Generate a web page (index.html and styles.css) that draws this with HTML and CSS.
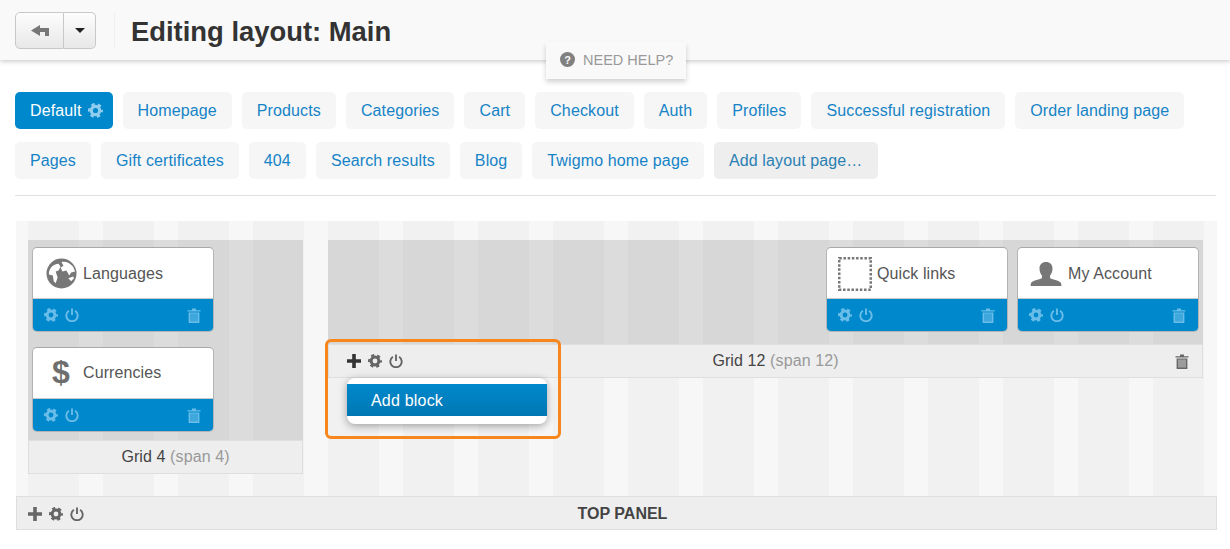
FILE: index.html
```html
<!DOCTYPE html>
<html lang="en">
<head>
  <meta charset="UTF-8">
  <title>Editing layout: Main</title>
  <link rel="stylesheet" href="styles.css">
</head>
<body>
  <svg class="sprites" width="0" height="0">
    <symbol id="i-gear" viewBox="0 0 14 14">
      <circle cx="7" cy="7" r="3.9" fill="none" stroke="currentColor" stroke-width="3"/>
      <circle cx="7" cy="7" r="5.8" fill="none" stroke="currentColor" stroke-width="2.4" stroke-dasharray="3.07 3" stroke-dashoffset="1.5"/>
    </symbol>
    <symbol id="i-power" viewBox="0 0 14 14">
      <path d="M3.900 2.800a5.700 5.700 0 1 0 6.200 0" fill="none" stroke="currentColor" stroke-width="1.900"/>
      <path d="M7 .5v6.500" fill="none" stroke="currentColor" stroke-width="1.900"/>
    </symbol>
    <symbol id="i-trash" viewBox="0 0 14 15">
      <path d="M.5 2.200h13v1.300H.5zM5 .5h4v1.700H5zM1.600 4.400h10.800V15H1.600z" fill="currentColor"/>
      <path d="M4 5.500v8M6 5.500v8M8 5.500v8M10 5.500v8" fill="none" stroke="var(--slit)" stroke-width=".8"/>
    </symbol>
    <symbol id="i-plus" viewBox="0 0 14 14">
      <path d="M5.200 0h3.600v5.200H14v3.600H8.800V14H5.200V8.800H0V5.200h5.200z" fill="currentColor"/>
    </symbol>
  </svg>

  <header class="topbar">
    <div class="btn-group">
      <button class="btn btn-back">
        <svg width="18" height="11" viewBox="0 0 18 11"><path d="M0 5.500 9 0v3h9v8h-4V7H9v4z" fill="#777"/></svg>
      </button>
      <button class="btn btn-caret"><span class="caret"></span></button>
    </div>
    <h1>Editing layout: Main</h1>
  </header>
  <div class="help"><span class="help-icon">?</span>NEED HELP?</div>

  <main class="page">
    <nav class="tabs">
      <a class="tab active">Default <svg class="ico tab-gear"><use href="#i-gear"/></svg></a>
      <a class="tab">Homepage</a>
      <a class="tab">Products</a>
      <a class="tab">Categories</a>
      <a class="tab">Cart</a>
      <a class="tab">Checkout</a>
      <a class="tab">Auth</a>
      <a class="tab">Profiles</a>
      <a class="tab">Successful registration</a>
      <a class="tab">Order landing page</a>
      <a class="tab">Pages</a>
      <a class="tab">Gift certificates</a>
      <a class="tab">404</a>
      <a class="tab">Search results</a>
      <a class="tab">Blog</a>
      <a class="tab">Twigmo home page</a>
      <a class="tab add">Add layout page…</a>
    </nav>

    <section class="canvas">
      <div class="row">
        <div class="grid grid-4">
          <div class="grid-body stack">
            <div class="block">
              <div class="block-head">
                <span class="block-icon">
                  <svg width="31" height="31" viewBox="0 0 32 32">
                    <circle cx="16" cy="16" r="15.500" fill="#777"/>
                    <path d="M3 15C4 10 8 6 13 6l2 3-2 4-3 1 2 6-2 6-2-2-1-6-4-1z" fill="#fff"/>
                    <path d="M16 4c4-1 9 1 12 5l2 5-4 1-2 3-3-5-4 1-2-4 3-2z" fill="#fff"/>
                    <path d="M23 21l5-2 1 2-3 3z" fill="#fff"/>
                  </svg>
                </span>
                Languages
              </div>
              <div class="block-foot">
                <svg class="ico"><use href="#i-gear"/></svg>
                <svg class="ico"><use href="#i-power"/></svg>
                <svg class="ico trash"><use href="#i-trash"/></svg>
              </div>
            </div>
            <div class="block">
              <div class="block-head">
                <span class="block-icon dollar">$</span>
                Currencies
              </div>
              <div class="block-foot">
                <svg class="ico"><use href="#i-gear"/></svg>
                <svg class="ico"><use href="#i-power"/></svg>
                <svg class="ico trash"><use href="#i-trash"/></svg>
              </div>
            </div>
          </div>
          <div class="bar">
            <span></span>
            <span class="bar-title">Grid 4 <em>(span 4)</em></span>
          </div>
        </div>

        <div class="grid grid-12">
          <div class="grid-body inline">
            <div class="block">
              <div class="block-head">
                <span class="block-icon">
                  <svg width="34" height="34" viewBox="0 0 34 34"><rect x="1.250" y="1.250" width="31.500" height="31.500" fill="none" stroke="#777" stroke-width="2.500" stroke-dasharray="2.500 1.700"/></svg>
                </span>
                Quick links
              </div>
              <div class="block-foot">
                <svg class="ico"><use href="#i-gear"/></svg>
                <svg class="ico"><use href="#i-power"/></svg>
                <svg class="ico trash"><use href="#i-trash"/></svg>
              </div>
            </div>
            <div class="block">
              <div class="block-head">
                <span class="block-icon">
                  <svg width="32" height="24" viewBox="0 0 32 24"><path d="M16 0c4 0 6.500 2.500 6.500 6.500 0 3-1 5.500-2.500 7v2.500c3 2 10 2.500 11 5l.5 3H.5l.5-3c1-2.500 8-3 11-5v-2.500c-1.500-1.500-2.500-4-2.500-7C9.500 2.500 12 0 16 0z" fill="#777"/></svg>
                </span>
                My Account
              </div>
              <div class="block-foot">
                <svg class="ico"><use href="#i-gear"/></svg>
                <svg class="ico"><use href="#i-power"/></svg>
                <svg class="ico trash"><use href="#i-trash"/></svg>
              </div>
            </div>
          </div>
          <div class="bar">
            <span class="bar-tools">
              <svg class="ico plus dark"><use href="#i-plus"/></svg>
              <svg class="ico"><use href="#i-gear"/></svg>
              <svg class="ico"><use href="#i-power"/></svg>
            </span>
            <span class="bar-title">Grid 12 <em>(span 12)</em></span>
            <svg class="ico trash bar-trash"><use href="#i-trash"/></svg>
          </div>
          <div class="menu"><div class="menu-item">Add block</div></div>
          <div class="callout"></div>
        </div>
      </div>

      <div class="bar top-panel">
        <span class="bar-tools">
          <svg class="ico plus"><use href="#i-plus"/></svg>
          <svg class="ico"><use href="#i-gear"/></svg>
          <svg class="ico"><use href="#i-power"/></svg>
        </span>
        <span class="bar-title">TOP PANEL</span>
      </div>
    </section>
  </main>
</body>
</html>
```

FILE: styles.css
```css
* {
  box-sizing: border-box;
}
body {
  margin: 0;
  font-family: "Liberation Sans", Arial, sans-serif;
  font-size: 16px;
  letter-spacing: 0.1px;
  color: #333;
  background: #fff;
  overflow: hidden;
}
.sprites {
  position: absolute;
}
.ico {
  width: 14px;
  height: 14px;
  flex: none;
  color: inherit;
}

/* top bar */
.topbar {
  display: flex;
  align-items: center;
  height: 60px;
  padding: 0 15px;
  background: #f9f9f9;
  box-shadow: 0 1px 5px rgba(0, 0, 0, 0.25);
}
.btn-group {
  display: flex;
  height: 37px;
  padding-right: 18px;
  border-right: 1px solid #f1f1f1;
  box-sizing: content-box;
}
.btn {
  display: flex;
  align-items: center;
  justify-content: center;
  height: 37px;
  padding: 0;
  background: linear-gradient(#fdfdfd, #e8e8e8);
  border: 1px solid #c8c8c8;
}
.btn-back {
  width: 49px;
  border-radius: 5px 0 0 5px;
}
.btn-caret {
  width: 32px;
  border-left: 0;
  border-radius: 0 5px 5px 0;
}
.caret {
  width: 0;
  height: 0;
  border: 5px solid transparent;
  border-top: 5px solid #222;
  border-bottom: 0;
}
h1 {
  margin: 3px 0 0 16px;
  font-size: 27.400px;
  font-weight: bold;
  letter-spacing: 0;
  color: #333;
}
.help {
  position: absolute;
  left: 546px;
  top: 42px;
  display: flex;
  align-items: center;
  width: 140px;
  height: 37px;
  padding: 0 0 2px 14px;
  font-size: 14.500px;
  letter-spacing: 0;
  color: #999;
  background: #f9f9f9;
  box-shadow: 0 3px 5px rgba(0, 0, 0, 0.18);
}
.help-icon {
  display: flex;
  align-items: center;
  justify-content: center;
  width: 15px;
  height: 15px;
  margin-right: 8px;
  font-size: 11px;
  font-weight: bold;
  color: #f9f9f9;
  background: #808080;
  border-radius: 50%;
}

/* layout tabs */
.page {
  padding: 32px 14px 0 15px;
}
.tabs {
  display: flex;
  flex-wrap: wrap;
  gap: 13px 10px;
  padding-bottom: 16px;
  border-bottom: 1px solid #e0e0e0;
}
.tab {
  display: flex;
  align-items: center;
  height: 37px;
  padding: 0 15px;
  letter-spacing: 0.12px;
  color: #1583c6;
  background: #f6f6f6;
  border-radius: 5px;
}
.tab.active {
  padding-right: 10px;
  color: #fff;
  background: #0088cc;
}
.tab.add {
  color: #2a80b3;
  background: #eeeeee;
}
.tab-gear {
  margin-left: 6px;
  width: 15px;
  height: 15px;
  color: #8fcdee;
}

/* canvas with the column stripes */
.canvas {
  width: 1201px;
  margin: 25px 0 0 1px;
  background: repeating-linear-gradient(90deg, #f7f7f7 0 12px, #f1f1f1 12px 63px, #f7f7f7 63px 75px);
}
.row {
  display: flex;
  gap: 25px;
  padding: 19px 13px 22px 12px;
}
.grid {
  position: relative;
  display: flex;
  flex-direction: column;
  align-items: stretch;
  align-self: flex-start;
}
.grid-4 {
  width: 275px;
}
.grid-12 {
  width: 875px;
}
.grid-body {
  display: flex;
  background: repeating-linear-gradient(90deg, #d7d7d7 0 51px, #dcdcdc 51px 75px);
}
.stack {
  flex-direction: column;
  gap: 15px;
  height: 200px;
  padding: 7px 0 0 4px;
}
.inline {
  justify-content: flex-end;
  gap: 9px;
  height: 104px;
  padding: 7px 4px 0 0;
}

/* blocks */
.block {
  width: 182px;
  height: 85px;
  overflow: hidden;
  border: 1px solid #b4b4b4;
  border-top-color: #a8a8a8;
  border-radius: 5px;
  background: #fff;
}
.block-head {
  display: flex;
  align-items: center;
  gap: 3px;
  height: 50px;
  padding: 1px 0 0 9px;
  color: #555;
}
.stack .block + .block .block-head {
  padding: 0 0 1px 9px;
}
.block-icon {
  display: flex;
  align-items: center;
  justify-content: center;
  width: 38px;
  height: 38px;
}
.dollar {
  font-size: 32px;
  font-weight: bold;
  letter-spacing: 0;
  color: #6e6e6e;
}
.block-foot {
  --slit: #0088cc;
  display: flex;
  align-items: center;
  gap: 7px;
  height: 33px;
  padding: 0 12px 0 11px;
  color: #69bde8;
  background: #0088cc;
  border-top: 1px solid #c9c9c9;
}
.trash {
  height: 15px;
}
.block-foot .trash {
  margin-left: auto;
}

/* grid footers and top panel */
.bar {
  --slit: #eeeeee;
  display: grid;
  grid-template-columns: 1fr auto 1fr;
  align-items: center;
  height: 34px;
  color: #666;
  background: #eeeeee;
  border: 1px solid #dedede;
}
.bar-title {
  margin-left: 20px;
  color: #444;
}
.bar-title em {
  font-style: normal;
  color: #999;
}
.bar-tools {
  display: flex;
  align-items: center;
  gap: 7px;
  padding-left: 18px;
}
.plus {
  height: 14px;
}
.dark {
  color: #333;
}
.bar-trash {
  justify-self: end;
  margin-right: 13px;
  color: #666;
}
.top-panel {
  padding-top: 1px;
}
.top-panel .bar-tools {
  padding-left: 11px;
}
.top-panel .bar-title {
  margin-left: 12px;
  font-weight: bold;
  letter-spacing: 0;
}

/* add block menu and highlight */
.menu {
  position: absolute;
  left: 19px;
  top: 138px;
  width: 200px;
  height: 46px;
  padding: 6px 0 7px;
  background: #fff;
  border-radius: 8px;
  box-shadow: 0 2px 8px rgba(0, 0, 0, 0.35);
}
.menu-item {
  display: flex;
  align-items: center;
  height: 32px;
  padding: 1px 0 0 24px;
  letter-spacing: 0.2px;
  color: #fff;
  background: linear-gradient(#0088cc, #0077b3);
}
.callout {
  position: absolute;
  left: -3px;
  top: 99px;
  width: 236px;
  height: 100px;
  border: 3px solid #f7861c;
  border-radius: 6px;
}
```
